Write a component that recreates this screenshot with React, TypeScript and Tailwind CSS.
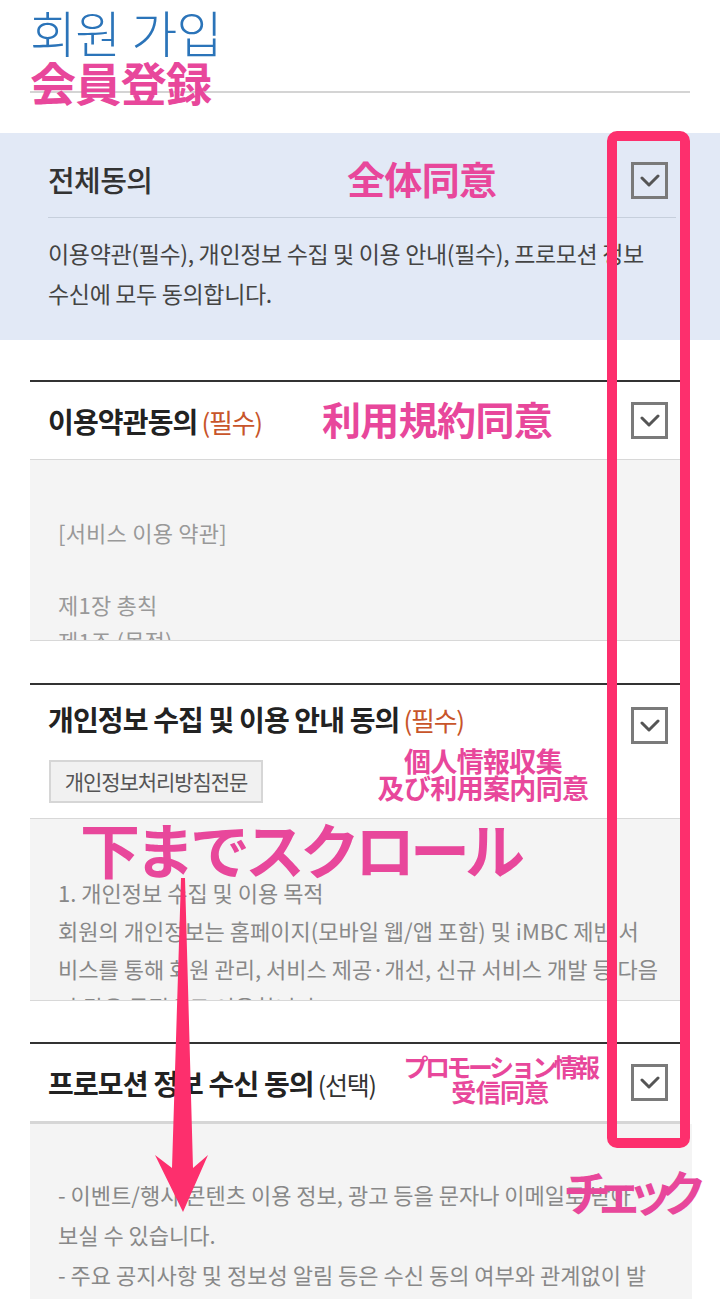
import React from "react";

const CheckBox = () => (
  <div className="w-[37px] h-[37px] shrink-0 border-[3px] border-[#7a7a7a] flex items-center justify-center">
    <svg width="20" height="13" viewBox="0 0 20 13" fill="none">
      <path d="M2 4 L9 11 L18 2" stroke="#555" strokeWidth="3" strokeLinecap="round" strokeLinejoin="round" />
    </svg>
  </div>
);

const Required = ({ text }: { text: string }) => (
  <span className="ml-[4px] text-[26px] font-normal text-[#c8552a] tracking-[-0.05em]">{text}</span>
);

// pink annotation text laid over the screenshot
const Note = ({ className, children }: { className: string; children: React.ReactNode }) => (
  <div
    className={
      "absolute font-['Noto_Sans_CJK_JP',sans-serif] font-bold text-[#e8479b] leading-none whitespace-nowrap " + className
    }
  >
    {children}
  </div>
);

export default function App() {
  return (
    <div className="relative w-[720px] h-[1299px] overflow-hidden bg-white font-['Noto_Sans_CJK_KR',sans-serif] tracking-[-0.04em]">
      <header className="mx-[30px] h-[93px] border-b-2 border-[#d4d4d4]">
        <h1 className="text-[50px] leading-[62px] font-light text-[#2b74b9]">회원 가입</h1>
      </header>

      {/* 전체 동의 */}
      <section className="mt-[40px] bg-[#e2e9f6] pl-[48px] pr-[44px] pt-[19px] pb-[27px]">
        <div className="h-[56px] flex items-center justify-between pr-[8px]">
          <h2 className="text-[29px] font-medium text-[#333] tracking-[-0.02em]">전체동의</h2>
          <CheckBox />
        </div>
        <div className="mt-[9px] border-t border-[#c6cfdc] pt-[15px] text-[23px] leading-[40px] text-[#444] tracking-[-0.015em] whitespace-nowrap">
          이용약관(필수), 개인정보 수집 및 이용 안내(필수), 프로모션 정보
          <br />
          수신에 모두 동의합니다.
        </div>
      </section>

      {/* 이용약관 */}
      <section className="ml-[30px] mr-[38px] mt-[40px] border-t-2 border-[#333]">
        <div className="h-[78px] flex items-center justify-between pl-[18px] pr-[14px] border-b border-[#d8d8d8]">
          <h2 className="text-[28px] font-bold text-[#222] tracking-[-0.03em]">
            이용약관동의
            <Required text="(필수)" />
          </h2>
          <CheckBox />
        </div>
        <div className="h-[181px] overflow-hidden bg-[#f4f4f4] border-b border-[#d8d8d8] pl-[28px] pt-[54px] text-[22px] leading-[36px] text-[#999] tracking-[0.01em] whitespace-nowrap">
          <p>[서비스 이용 약관]</p>
          <p>&nbsp;</p>
          <p>제1장 총칙</p>
          <p>제1조 (목적)</p>
          <p>이 약관은 주식회사 아이엠비씨가 제공하는 서비스의</p>
        </div>
      </section>

      {/* 개인정보 */}
      <section className="ml-[30px] mr-[38px] mt-[42px] border-t-2 border-[#333]">
        <div className="h-[134px] flex justify-between pl-[18px] pr-[14px] border-b border-[#d8d8d8]">
          <div className="pt-[16px]">
            <h2 className="text-[28px] leading-[36px] font-bold text-[#222] tracking-[-0.03em]">
              개인정보 수집 및 이용 안내 동의
              <Required text="(필수)" />
            </h2>
            <button className="mt-[22px] h-[43px] w-[214px] ml-px border-2 border-[#d6d6d6] bg-[#f1f1f1] text-[21px] text-[#555] tracking-[-0.05em]">
              개인정보처리방침전문
            </button>
          </div>
          <div className="pt-[22px]">
            <CheckBox />
          </div>
        </div>
        <div className="h-[182px] overflow-hidden bg-[#f4f4f4] border-b border-[#d8d8d8] pl-[28px] pt-[54px] text-[22px] leading-[38px] text-[#888] tracking-[0em] whitespace-nowrap">
          <p>1. 개인정보 수집 및 이용 목적</p>
          <p>회원의 개인정보는 홈페이지(모바일 웹/앱 포함) 및 iMBC 제반 서</p>
          <p>비스를 통해 회원 관리, 서비스 제공·개선, 신규 서비스 개발 등 다음</p>
          <p>과 같은 목적으로 이용합니다.</p>
        </div>
      </section>

      {/* 프로모션 */}
      <section className="ml-[30px] mr-[28px] mt-[41px]">
        <div className="mr-[10px] border-t-2 border-[#333] h-[82px] flex items-center justify-between pl-[18px] pr-[14px] border-b-[3px] border-b-[#d6d6d6]">
          <h2 className="text-[28px] font-bold text-[#222] tracking-[-0.03em]">
            프로모션 정보 수신 동의
            <span className="ml-[4px] text-[25px] font-normal text-[#333] tracking-[-0.05em]">(선택)</span>
          </h2>
          <CheckBox />
        </div>
        <div className="h-[200px] bg-[#f4f4f4] pl-[28px] pt-[50px] text-[22px] leading-[40px] text-[#888] tracking-[0em] whitespace-nowrap">
          <p>- 이벤트/행사 콘텐츠 이용 정보, 광고 등을 문자나 이메일로 받아</p>
          <p>보실 수 있습니다.</p>
          <p>- 주요 공지사항 및 정보성 알림 등은 수신 동의 여부와 관계없이 발</p>
          <p>송됩니다.</p>
        </div>
      </section>

      {/* annotations */}
      <div className="absolute left-[607px] top-[131px] w-[83px] h-[1017px] border-[10px] border-[#fd2f6d] rounded-[10px]" />

      <svg className="absolute left-0 top-0 pointer-events-none" width="720" height="1299" viewBox="0 0 720 1299">
        <polygon
          points="181,878 185,878 193,1168 208,1155 183,1212 155,1155 172,1168"
          fill="#fd2f6d"
        />
      </svg>

      <Note className="left-[30px] top-[58px] text-[46px]">会員登録</Note>
      <Note className="left-[347px] top-[159px] text-[38px]">全体同意</Note>
      <Note className="left-[322px] top-[399px] text-[39px]">利用規約同意</Note>
      <Note className="left-[374px] top-[747px] w-[218px] text-center text-[27px] leading-[29px]">
        個人情報収集
        <br />
        及び利用案内同意
      </Note>
      <Note className="left-[80px] top-[818px] text-[60px] tracking-[-5px]">下までスクロール</Note>
      <Note className="left-[402px] top-[1054px] w-[196px] text-center text-[25px] leading-[28px]">
        <span className="tracking-[-3.5px]">プロモーション情報</span>
        <br />
        受信同意
      </Note>
      <Note className="left-[563px] top-[1166px] text-[48px] tracking-[-16px]">チェック</Note>
    </div>
  );
}
